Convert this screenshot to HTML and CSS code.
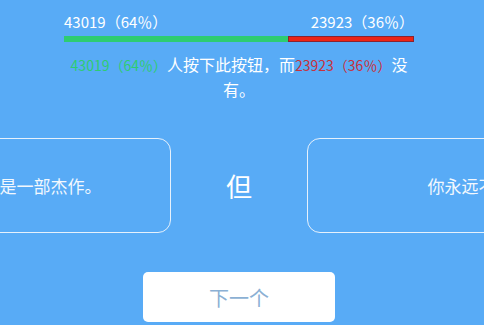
FILE: index.html
```html
<!DOCTYPE html>
<html lang="zh">
<head>
<meta charset="utf-8">
<link rel="stylesheet" href="styles.css">
</head>
<body>
<div class="page">
  <section class="stats">
    <div class="labels">
      <span>43019（64％）</span>
      <span>23923（36％）</span>
    </div>
    <div class="bar">
      <div class="bar-yes" style="width:64%"></div>
      <div class="bar-no"></div>
    </div>
    <p class="summary"><span class="yes">43019（64％）</span>人按下此按钮，而<span class="no">23923（36％）</span>没有。</p>
  </section>
  <section class="cards">
    <div class="card"><span>你最喜欢的电影是一部杰作。</span></div>
    <div class="but">但</div>
    <div class="card"><span>你永远不会知道</span></div>
  </section>
  <div class="actions">
    <button class="next">下一个</button>
  </div>
</div>
</body>
</html>
```
FILE: styles.css
```css
html, body {
  margin: 0;
  padding: 0;
  background: #58abf6;
  overflow: hidden;
}
body {
  font-family: "Noto Sans CJK SC", "Noto Sans", sans-serif;
  color: #fff;
  width: 484px;
  height: 325px;
}
.page {
  width: 478px;
  display: flex;
  flex-direction: column;
  align-items: center;
  padding-top: 12px;
}
.stats {
  width: 350px;
}
.labels {
  display: flex;
  justify-content: space-between;
  font-size: 15px;
  line-height: 20px;
}
.bar {
  display: flex;
  height: 6px;
  margin-top: 4px;
}
.bar-yes {
  background: #2ecc71;
}
.bar-no {
  flex: 1;
  background: #ec2415;
  box-shadow: inset 0 0 0 1px #8a2331;
}
.summary {
  margin: 10px 0 0;
  font-size: 16px;
  line-height: 24px;
  text-align: center;
}
.yes, .no {
  font-size: 14px;
}
.yes {
  color: #2ecc71;
}
.no {
  color: #c8313c;
}
.cards {
  display: flex;
  justify-content: center;
  align-items: center;
  width: 478px;
  margin-top: 37px;
}
.card {
  flex: none;
  width: 360px;
  height: 95px;
  box-sizing: border-box;
  border: 1.5px solid #e6f1fc;
  border-radius: 13px;
  display: flex;
  align-items: center;
  justify-content: center;
  font-size: 17px;
  color: #f2f8fe;
  white-space: nowrap;
}
.but {
  flex: none;
  width: 136px;
  text-align: center;
  font-size: 26px;
  line-height: 30px;
}
.actions {
  margin-top: 39px;
}
.next {
  width: 192px;
  height: 50px;
  background: #fff;
  border: none;
  border-radius: 5px;
  font-family: "Noto Sans CJK SC", sans-serif;
  font-size: 20px;
  color: #8bb0d4;
  padding: 0;
}
```
